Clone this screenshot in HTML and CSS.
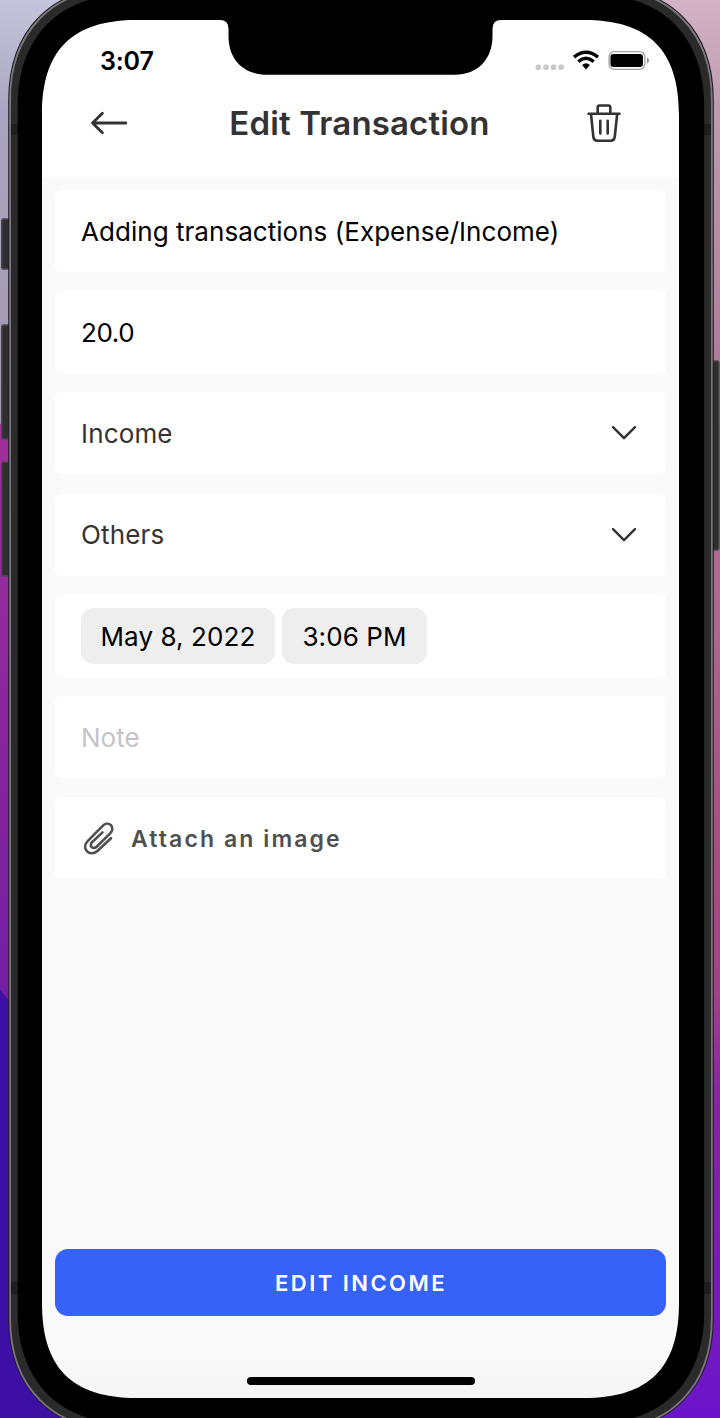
FILE: index.html
```
<!DOCTYPE html>
<html lang="en">
<head>
<meta charset="utf-8">
<title>Edit Transaction</title>
<link rel="stylesheet" href="styles.css">
</head>
<body>
<div class="stage">
  <svg class="wallpaper" viewBox="0 0 720 1418" aria-hidden="true">
    <defs>
      <linearGradient id="wl" x1="0" y1="0" x2="0" y2="1">
        <stop offset="0" stop-color="#c4c5dc"/><stop offset=".08" stop-color="#aaa5c0"/><stop offset=".3" stop-color="#a397ad"/>
      </linearGradient>
      <linearGradient id="wp" gradientUnits="userSpaceOnUse" x1="0" y1="420" x2="0" y2="1000">
        <stop offset="0" stop-color="#a0309a"/><stop offset="1" stop-color="#741da2"/>
      </linearGradient>
      <linearGradient id="wr" x1="0" y1="0" x2="0" y2="1">
        <stop offset="0" stop-color="#d3b3c4"/><stop offset=".08" stop-color="#bd9ab0"/><stop offset=".25" stop-color="#b07d9c"/>
        <stop offset=".45" stop-color="#a9688e"/><stop offset=".6" stop-color="#a54e82"/><stop offset=".7" stop-color="#a04389"/>
        <stop offset=".77" stop-color="#8725a0"/><stop offset="1" stop-color="#6b14cb"/>
      </linearGradient>
    </defs>
    <rect width="360" height="1418" fill="url(#wl)"/>
    <path d="M0 423L14 448V1010H0Z" fill="url(#wp)"/>
    <path d="M0 990L14 1006L120 1418H0Z" fill="#3e0fa5"/>
    <rect x="360" width="360" height="1418" fill="url(#wr)"/>
  </svg>

  <main class="screen">
    <header class="top">
      <div class="status">
        <span class="time">3:07</span>
        <svg class="signals" viewBox="0 0 116 24" aria-hidden="true">
          <g fill="#c9c9c9"><rect x=".5" y="14.5" width="5.5" height="5.5" rx="2"/><rect x="8.2" y="14.5" width="5.5" height="5.5" rx="2"/><rect x="15.8" y="14.5" width="5.5" height="5.5" rx="2"/><rect x="23.4" y="14.5" width="5.5" height="5.5" rx="2"/></g>
          <g fill="none" stroke="#000" stroke-width="3.4"><path d="M39 7.1Q51 -2.5 63 7.1"/><path d="M43.3 11.6Q51 5.1 58.7 11.6"/></g>
          <path d="M47.1 14.9Q51 11.6 54.9 14.9L51 19.4Z" fill="#000"/>
          <rect x="74.1" y="1.6" width="35.8" height="17.8" rx="5.4" fill="none" stroke="#a3a3a3" stroke-width="1.4"/>
          <rect x="76.5" y="4" width="33" height="13" rx="3.2" fill="#000" transform="translate(.1 0) scale(.985 1)"/>
          <path d="M112 7.6Q114 8.5 114 10.5T112 13.6Z" fill="#8e8e8e"/>
        </svg>
      </div>
      <div class="nav">
        <svg class="back" viewBox="0 0 38 26" fill="none" stroke="#333" stroke-width="2.8" stroke-linecap="round" stroke-linejoin="round"><path d="M12.4 3.2L2.5 13L12.4 22.8M2.5 13H35.8"/></svg>
        <h1 class="title">Edit Transaction</h1>
        <svg class="trash" viewBox="0 0 36 40" fill="none" stroke="#333" stroke-width="2.6" stroke-linecap="round" stroke-linejoin="round"><path d="M2.5 10.7H33.5M5 11L7.3 33.5Q7.7 37.7 11.4 37.7H24.8Q28.3 37.7 28.8 33.5L31.2 11M11.7 10V4.5Q11.7 2.5 13.7 2.5H22.3Q24.3 2.5 24.3 4.5V10M14.3 17.8V30.4M21.7 17.8V30.4"/></svg>
      </div>
    </header>

    <form class="form">
      <div class="field"><span class="value name">Adding transactions (Expense/Income)</span></div>
      <div class="field"><span class="value amount">20.0</span></div>
      <div class="field select"><span class="value kind">Income</span><svg class="chevron" viewBox="0 0 26 16"><path d="M2 2.2L13 13.2L24 2.2"/></svg></div>
      <div class="field select"><span class="value group">Others</span><svg class="chevron" viewBox="0 0 26 16"><path d="M2 2.2L13 13.2L24 2.2"/></svg></div>
      <div class="field when"><span class="pill date"><span>May 8, 2022</span></span><span class="pill hour"><span>3:06 PM</span></span></div>
      <div class="field"><span class="value note">Note</span></div>
      <div class="field attach">
        <svg class="clip" viewBox="0 0 32 34" fill="none" stroke="#505050" stroke-width="2.6" stroke-linecap="round" stroke-linejoin="round"><path d="M28 17.2L14.4 30C11 33 6.3 33 3.8 30.2C1.2 27.3 1.6 23.2 4.9 19.8L19.4 5.1C22.1 2.4 25.5 1.9 27.8 4C30.1 6.2 29.7 9.8 27.2 12.4L13.9 25.5C12.2 27.2 10 27.4 8.6 26C7.2 24.6 7.6 22.6 9.2 21L19.5 11.4"/></svg>
        <span class="attach-label">Attach an image</span>
      </div>
    </form>

    <div class="action"><button class="submit" type="button"><span>EDIT INCOME</span></button></div>
    <div class="home"></div>
  </main>

  <svg class="frame" viewBox="0 0 720 1418" aria-hidden="true">
    <g fill="#2e2f2d" stroke="#4d4850" stroke-width="1.4">
      <rect x="1.7" y="219" width="10" height="50" rx="1.5"/><rect x="1.7" y="325" width="10" height="114" rx="1.5"/><rect x="1.7" y="462" width="10" height="114" rx="1.5"/><rect x="708" y="361" width="11" height="189" rx="2"/>
    </g>
    <path fill="none" stroke="#221b29" stroke-width="1.6" d="M9 100C9 31 51 -13 122 -13H600C671 -13 713 31 713 100V1318C713 1387 671 1431 600 1431H122C51 1431 9 1387 9 1318Z"/>
    <path fill="none" stroke="#292a29" stroke-width="10" d="M15 103C15 36 56 -8 123 -8H599C666 -8 707 36 707 103V1315C707 1382 666 1426 599 1426H123C56 1426 15 1382 15 1315Z"/>
    <path fill="none" stroke="#777" stroke-width="1.8" d="M10.1 100C10.1 31.5 52 -12 122 -12H600C670 -12 711.8 31.5 711.8 100V1318C711.8 1387 670 1430 600 1430H122C52 1430 10.1 1387 10.1 1318Z"/>
    <path fill="#1d1e1d" d="M11 124H18V135H11ZM704 124H711V135H704ZM11 1282H18V1294H11ZM704 1282H711V1294H704Z"/>
    <path fill="#000" fill-rule="evenodd" d="M17.7 105C17.7 39 58 -5 125 -5H597C664 -5 704.2 39 704.2 105V1313C704.2 1379 664 1423 597 1423H125C58 1423 17.7 1379 17.7 1313ZM42 115C42 50 72 20 137 20H220Q228.5 20 228.5 29V36C228.5 59 243 74.7 267 74.7H455C478 74.7 492.5 59 492.5 36V29Q492.5 20 501 20H584C649 20 679 50 679 115V1303C679 1368 649 1398 584 1398H137C72 1398 42 1368 42 1303Z"/>
  </svg>
</div>
</body>
</html>
```
FILE: styles.css
```
* { box-sizing: border-box; }
body { margin: 0; font-family: Inter, "Liberation Sans", sans-serif; }
.stage { position: relative; width: 720px; height: 1418px; overflow: hidden; padding: 20px 41px 20px 42px; }
.wallpaper, .frame { position: absolute; inset: 0; width: 720px; height: 1418px; }
.frame { pointer-events: none; }
.screen { position: relative; display: flex; flex-direction: column; height: 1378px; background: linear-gradient(#f9f9f9 97%, #f5f5f5); }
.top { height: 157px; background: #fff; flex: none; }
.status { display: flex; justify-content: space-between; height: 65px; padding: 29px 28px 0 58px; }
.time { font-size: 25px; line-height: 24px; font-weight: 600; letter-spacing: -.15px; color: #000; white-space: nowrap; }
.signals { width: 116px; height: 24px; margin-top: 1px; }
.nav { display: flex; align-items: center; justify-content: space-between; height: 75px; padding: 0 57px 0 48px; }
.back { width: 38px; height: 26px; }
.title { margin: 0 0 0 5px; font-size: 33px; line-height: 40px; font-weight: 600; letter-spacing: .15px; color: #333; white-space: nowrap; }
.trash { width: 36px; height: 40px; }
.form { display: flex; flex-direction: column; gap: 19.2px; padding: 13px 13px 0; }
.field { display: flex; align-items: center; height: 82px; padding: 0 29px 0 26px; background: #fff; border-radius: 6px; white-space: nowrap; font-size: 26px; color: #000; }
.name { letter-spacing: .04px; }
.amount { letter-spacing: -.4px; }
.select { justify-content: space-between; color: #333; }
.kind, .group { letter-spacing: .15px; }
.note { color: #c4c4c6; padding-top: 1px; }
.chevron { width: 26px; height: 16px; fill: none; stroke: #333; stroke-width: 2.4; stroke-linecap: round; stroke-linejoin: round; }
.when { gap: 7px; }
.pill { display: flex; align-items: center; justify-content: center; height: 56px; border-radius: 12px; background: #eee; padding-top: 1px; }
.date { width: 194px; letter-spacing: .1px; }
.hour { width: 145px; letter-spacing: .1px; }
.attach { gap: 16px; padding-left: 28px; }
.clip { width: 32px; height: 34px; }
.attach-label { font-size: 23px; font-weight: 600; letter-spacing: 2.1px; color: #505050; padding-top: 1px; }
.action { margin-top: auto; padding: 0 13px; }
.submit { display: block; width: 100%; height: 67px; border: 0; border-radius: 13px; background: #3762f7; color: #fff; font: 600 22px/67px Inter, sans-serif; letter-spacing: 2.45px; padding: 1px 0 0 1px; }
.home { width: 228px; height: 8px; margin: 61px auto 13px; border-radius: 4px; background: #000; flex: none; }
```
